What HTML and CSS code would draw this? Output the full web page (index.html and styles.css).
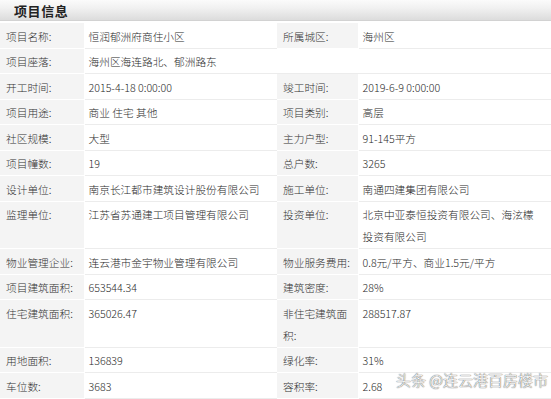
FILE: index.html
```html
<!DOCTYPE html>
<html lang="zh-CN">
<head>
<meta charset="utf-8">
<title>项目信息</title>
<link rel="stylesheet" href="styles.css">
</head>
<body>
<div class="panel">
  <div class="panel-head"><h2 class="panel-title">项目信息</h2></div>
  <table class="info">
    <colgroup>
      <col class="c-l1"><col class="c-v1"><col class="c-l2"><col class="c-v2">
    </colgroup>
    <tbody>
      <tr><td class="lbl">项目名称:</td><td class="val">恒润郁洲府商住小区</td><td class="lbl">所属城区:</td><td class="val">海州区</td></tr>
      <tr><td class="lbl">项目座落:</td><td class="val" colspan="3">海州区海连路北、郁洲路东</td></tr>
      <tr><td class="lbl">开工时间:</td><td class="val">2015-4-18 0:00:00</td><td class="lbl">竣工时间:</td><td class="val">2019-6-9 0:00:00</td></tr>
      <tr><td class="lbl">项目用途:</td><td class="val">商业 住宅 其他</td><td class="lbl">项目类别:</td><td class="val">高层</td></tr>
      <tr><td class="lbl">社区规模:</td><td class="val">大型</td><td class="lbl">主力户型:</td><td class="val">91-145平方</td></tr>
      <tr><td class="lbl">项目幢数:</td><td class="val">19</td><td class="lbl">总户数:</td><td class="val">3265</td></tr>
      <tr><td class="lbl">设计单位:</td><td class="val">南京长江都市建筑设计股份有限公司</td><td class="lbl">施工单位:</td><td class="val">南通四建集团有限公司</td></tr>
      <tr><td class="lbl">监理单位:</td><td class="val">江苏省苏通建工项目管理有限公司</td><td class="lbl">投资单位:</td><td class="val">北京中亚泰恒投资有限公司、海泫檬投资有限公司</td></tr>
      <tr><td class="lbl">物业管理企业:</td><td class="val">连云港市金宇物业管理有限公司</td><td class="lbl">物业服务费用:</td><td class="val">0.8元/平方、商业1.5元/平方</td></tr>
      <tr><td class="lbl">项目建筑面积:</td><td class="val">653544.34</td><td class="lbl">建筑密度:</td><td class="val">28%</td></tr>
      <tr><td class="lbl">住宅建筑面积:</td><td class="val">365026.47</td><td class="lbl">非住宅建筑面积:</td><td class="val">288517.87</td></tr>
      <tr><td class="lbl">用地面积:</td><td class="val">136839</td><td class="lbl">绿化率:</td><td class="val">31%</td></tr>
      <tr><td class="lbl">车位数:</td><td class="val">3683</td><td class="lbl">容积率:</td><td class="val">2.68</td></tr>
    </tbody>
  </table>
  <div class="watermark">头条 @连云港百房楼市</div>
</div>
</body>
</html>
```

FILE: styles.css
```css
html, body {
  margin: 0;
  padding: 0;
  background: #fff;
}

body {
  width: 551px;
  height: 399px;
  overflow: hidden;
  font-family: "Noto Sans CJK SC", "Noto Sans", sans-serif;
  color: #333;
}

.panel {
  position: relative;
  width: 551px;
}

.panel-head {
  height: 21px;
  background: linear-gradient(to bottom, #fbfbfb 0%, #f1f1f1 40%, #dcdcdc 100%);
  border-bottom: 1px solid #d2d2d2;
  box-sizing: border-box;
  margin-bottom: 2px;
  display: flex;
  align-items: center;
  padding-left: 14px;
}

.panel-title {
  margin: 0;
  font-size: 13px;
  font-weight: bold;
  letter-spacing: 0.6px;
  color: #222;
  line-height: 1;
}

.info {
  width: 551px;
  table-layout: fixed;
  border-collapse: collapse;
  border-spacing: 0;
}

.c-l1 { width: 84px; }
.c-v1 { width: 193px; }
.c-l2 { width: 81px; }
.c-v2 { width: 193px; }

.info td {
  font-size: 10.7px;
  font-weight: 300;
  line-height: 22px;
  padding: 2.5px 0 0 0;
  vertical-align: top;
}

.info td.lbl {
  background: #f4f4f4;
  color: #333;
  padding-left: 6px;
  padding-right: 4px;
  border-bottom: 1px solid #fff;
  border-right: 1px solid #fff;
}

.info td.val {
  background: #fff;
  color: #2a2a2a;
  padding-left: 4px;
  padding-right: 10px;
  border-bottom: 1px solid #ececec;
}

.watermark {
  position: absolute;
  left: 396px;
  top: 371px;
  font-size: 15px;
  font-weight: 300;
  line-height: 18px;
  color: #fdfdfd;
  white-space: nowrap;
  text-shadow: 0 0 1px #555, 0 0 1px #555;
}
```
